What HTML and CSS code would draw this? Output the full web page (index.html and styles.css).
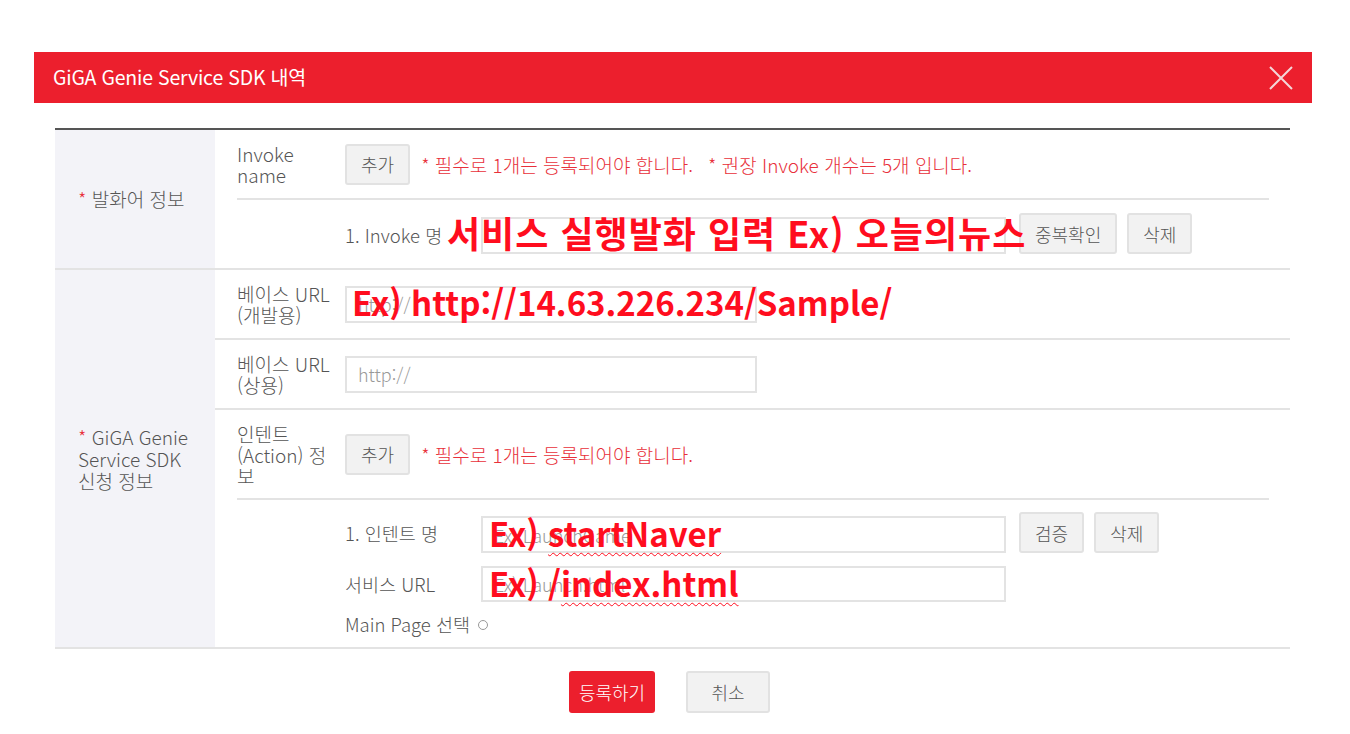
FILE: index.html
```html
<!DOCTYPE html>
<html lang="ko">
<head>
<meta charset="utf-8">
<title>GiGA Genie Service SDK 내역</title>
<link rel="stylesheet" href="styles.css">
</head>
<body>
<div class="modal">
  <div class="modal-header">
    <h1 class="modal-title">GiGA Genie Service SDK 내역</h1>
    <span class="close" aria-label="닫기">
      <svg width="24" height="24" viewBox="0 0 24 24"><path d="M1 1 L23 23 M23 1 L1 23" stroke="#f4d6d8" stroke-width="2" fill="none"/></svg>
    </span>
  </div>
  <div class="modal-body">
    <div class="form-table">
      <div class="section">
        <div class="sec-head sec-head-1"><div><span class="req">*</span> 발화어 정보</div></div>
        <div class="sec-content">
          <div class="inner">
            <div class="sub-row head-row invoke-head">
              <div class="label">Invoke<br>name</div>
              <button class="btn">추가</button>
              <span class="note">* 필수로 1개는 등록되어야 합니다.</span>
              <span class="note note-second">* 권장 Invoke 개수는 5개 입니다.</span>
            </div>
            <div class="sub-row item-row invoke-item">
              <span class="item-label">1. Invoke 명</span>
              <input class="field field-long" type="text">
              <button class="btn btn-first">중복확인</button>
              <button class="btn btn-next">삭제</button>
              <span class="anno anno-invoke">서비스 실행발화 입력 Ex) 오늘의뉴스</span>
            </div>
          </div>
        </div>
      </div>
      <div class="section">
        <div class="sec-head sec-head-2"><div><span class="req">*</span> GiGA Genie<br>Service SDK<br>신청 정보</div></div>
        <div class="sec-content">
          <div class="url-row">
            <div class="label">베이스 URL<br>(개발용)</div>
            <input class="field field-url" type="text" placeholder="http://">
            <span class="anno anno-dev">Ex) http://14.63.226.234/Sample/</span>
          </div>
          <div class="url-row">
            <div class="label">베이스 URL<br>(상용)</div>
            <input class="field field-url" type="text" placeholder="http://">
          </div>
          <div class="intent-row">
            <div class="inner">
              <div class="sub-row intent-head">
                <div class="label">인텐트<br>(Action) 정<br>보</div>
                <button class="btn">추가</button>
                <span class="note">* 필수로 1개는 등록되어야 합니다.</span>
              </div>
              <div class="intent-items">
                <div class="item-row intent-name">
                  <span class="item-label">1. 인텐트 명</span>
                  <input class="field field-long" type="text" placeholder="Ex) LaunchGame">
                  <button class="btn btn-first">검증</button>
                  <button class="btn btn-next">삭제</button>
                  <span class="anno anno-intent">Ex) <span class="spell">startNaver</span></span>
                </div>
                <div class="item-row intent-url">
                  <span class="item-label">서비스 URL</span>
                  <input class="field field-long field-short-h" type="text" placeholder="Ex) Launch.html">
                  <span class="anno anno-url">Ex) /<span class="spell">index.html</span></span>
                </div>
                <div class="main-page">Main Page 선택 <span class="radio"></span></div>
              </div>
            </div>
          </div>
        </div>
      </div>
    </div>
    <div class="actions">
      <button class="act act-primary">등록하기</button>
      <button class="act act-cancel">취소</button>
    </div>
  </div>
</div>
</body>
</html>
```
FILE: styles.css
```css
* { box-sizing: border-box; }
body {
  margin: 0;
  background: #fff;
  color: #555;
  font-family: "Noto Sans CJK KR", "Noto Sans", sans-serif;
  font-weight: 300;
}
.modal {
  margin: 52px 0 0 34px;
  width: 1278px;
}
.modal-header {
  height: 51px;
  background: #ec1f2d;
  display: flex;
  align-items: center;
  justify-content: space-between;
  padding: 0 19px 0 19px;
}
.modal-title {
  margin: 0 0 2px;
  font-size: 19.5px;
  font-weight: 400;
  color: #fff;
  letter-spacing: -0.2px;
}
.close { display: flex; }
.modal-body {
  padding: 25px 22px 30px 21px;
}
.form-table {
  border-top: 2px solid #555;
}
.section {
  display: flex;
  border-bottom: 2px solid #e3e3e3;
}
.sec-head {
  width: 160px;
  padding-left: 23px;
  background: #f3f3f8;
  display: flex;
  align-items: center;
  font-size: 19px;
  line-height: 22px;
}
.req { color: #e8303a; }
.sec-content { flex: 1; }
.inner { margin: 0 21px 0 22px; }
.sub-row {
  position: relative;
  display: flex;
  align-items: center;
}
.label {
  width: 108px;
  font-size: 19px;
  line-height: 21px;
  flex-shrink: 0;
}
.btn {
  height: 41px;
  padding: 0 14px;
  border: 2px solid #e2e2e2;
  border-radius: 3px;
  background: #f2f2f2;
  color: #555;
  font-family: inherit;
  font-weight: 300;
  font-size: 18px;
}
.note {
  margin-left: 11px;
  font-size: 19px;
  color: #e8303a;
}
.note-second { margin-left: 15px; }
.invoke-head {
  height: 70px;
  border-bottom: 2px solid #e3e3e3;
}
.item-row {
  position: relative;
  display: flex;
  align-items: flex-end;
  padding-left: 108px;
}
.invoke-item {
  height: 68px;
  padding-top: 13px;
  align-items: flex-start;
}
.invoke-item .field { margin-top: 4px; }
.item-label {
  width: 136px;
  font-size: 18.5px;
  align-self: center;
  flex-shrink: 0;
}
.invoke-item .item-label { align-self: auto; margin-top: 9px; }
.field {
  height: 37px;
  border: 2px solid #e3e3e3;
  background: #fff;
  padding: 0 11px;
  font-family: inherit;
  font-weight: 300;
  font-size: 18px;
  color: #555;
}
.field::placeholder { color: #999; }
.field-long { width: 525px; }
.field-url { width: 412px; }
.btn-first { margin-left: 13px; }
.btn-next { margin-left: 10px; }
.url-row {
  position: relative;
  display: flex;
  align-items: center;
  height: 70px;
  padding-left: 22px;
  border-bottom: 2px solid #e3e3e3;
}
.intent-head {
  height: 90px;
  border-bottom: 2px solid #e3e3e3;
}
.intent-items {
  padding: 12px 0 11px;
}
.intent-name .item-label { align-self: center; }
.intent-url { margin-top: 13px; }
.field-short-h { height: 36px; }
.main-page {
  padding-left: 108px;
  margin-top: 11px;
  font-size: 18.5px;
  line-height: 23px;
  display: flex;
  align-items: center;
}
.radio {
  display: inline-block;
  width: 10px;
  height: 10px;
  border: 1px solid #999;
  border-radius: 50%;
  margin-left: 8px;
}
.anno {
  position: absolute;
  white-space: nowrap;
  font-family: "Noto Sans CJK KR", "Noto Sans", sans-serif;
  font-weight: 700;
  font-size: 33px;
  line-height: 34px;
  color: #ff0d1e;
  pointer-events: none;
}
.anno-invoke { left: 210px; top: 15px; font-size: 36px; letter-spacing: 1px; }
.anno-dev { left: 137px; top: 15px; }
.anno-intent { left: 252px; top: 4px; }
.anno-url { left: 252px; top: 0; }
.spell {
  text-decoration: underline wavy #ff0d1e;
  text-decoration-thickness: 1px;
  text-underline-offset: 5px;
}
.actions {
  display: flex;
  justify-content: center;
  gap: 31px;
  margin-top: 22px;
  padding-right: 6px;
}
.act {
  height: 42px;
  border-radius: 3px;
  font-family: inherit;
  font-weight: 300;
  font-size: 18px;
}
.act-primary {
  width: 86px;
  background: #ec1f2d;
  border: 0;
  color: #fff;
}
.act-cancel {
  width: 84px;
  background: #f2f2f2;
  border: 2px solid #e2e2e2;
  color: #555;
}
```
